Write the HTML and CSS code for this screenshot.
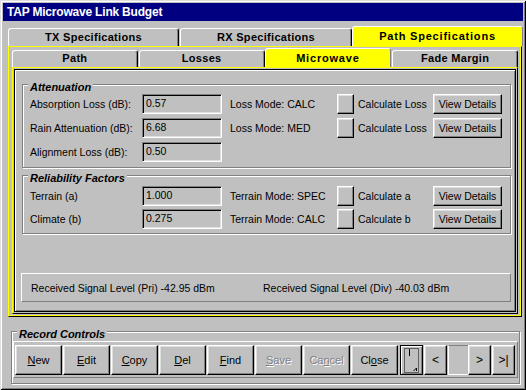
FILE: index.html
```html
<!doctype html>
<html lang="en">
<head>
    <meta charset="UTF-8">
    <meta name="viewport" content="width=device-width, initial-scale=1.0">
    <title>TAP Microwave Link Budget</title>
    <link rel="stylesheet" href="styles.css">
</head>
<body>
<div class="window">
    <div class="titlebar">TAP Microwave Link Budget</div>

    <div class="tab-strip main-tabs">
        <div class="tab tx">TX Specifications</div>
        <div class="tab rx">RX Specifications</div>
        <div class="tab active path-spec">Path Specifications</div>
    </div>

    <div class="outer-page">
        <div class="tab-strip sub-tabs">
            <div class="tab sub path">Path</div>
            <div class="tab sub losses">Losses</div>
            <div class="tab sub active microwave">Microwave</div>
            <div class="tab sub fade">Fade Margin</div>
        </div>

        <div class="inner-page">
            <div class="frame">
                <div class="group attenuation">
                    <div class="group-title">Attenuation</div>
                    <div class="row">
                        <span class="label">Absorption Loss (dB):</span>
                        <span class="field">0.57</span>
                        <span class="mode">Loss Mode: CALC</span>
                        <button class="btn square"></button>
                        <span class="calc">Calculate Loss</span>
                        <button class="btn details">View Details</button>
                    </div>
                    <div class="row">
                        <span class="label">Rain Attenuation (dB):</span>
                        <span class="field">6.68</span>
                        <span class="mode">Loss Mode: MED</span>
                        <button class="btn square"></button>
                        <span class="calc">Calculate Loss</span>
                        <button class="btn details">View Details</button>
                    </div>
                    <div class="row">
                        <span class="label">Alignment Loss (dB):</span>
                        <span class="field">0.50</span>
                    </div>
                </div>

                <div class="group reliability">
                    <div class="group-title">Reliability Factors</div>
                    <div class="row">
                        <span class="label">Terrain (a)</span>
                        <span class="field">1.000</span>
                        <span class="mode">Terrain Mode: SPEC</span>
                        <button class="btn square"></button>
                        <span class="calc">Calculate a</span>
                        <button class="btn details">View Details</button>
                    </div>
                    <div class="row">
                        <span class="label">Climate (b)</span>
                        <span class="field">0.275</span>
                        <span class="mode">Terrain Mode: CALC</span>
                        <button class="btn square"></button>
                        <span class="calc">Calculate b</span>
                        <button class="btn details">View Details</button>
                    </div>
                </div>

                <div class="status">
                    <span class="status-pri">Received Signal Level (Pri) -42.95 dBm</span>
                    <span>Received Signal Level (Div) -40.03 dBm</span>
                </div>
            </div>
        </div>
    </div>

    <div class="group record">
        <div class="group-title">Record Controls</div>
        <div class="toolbar">
            <button class="btn cmd"><u>N</u>ew</button>
            <button class="btn cmd"><u>E</u>dit</button>
            <button class="btn cmd"><u>C</u>opy</button>
            <button class="btn cmd"><u>D</u>el</button>
            <button class="btn cmd"><u>F</u>ind</button>
            <button class="btn cmd disabled"><u>S</u>ave</button>
            <button class="btn cmd disabled">Ca<u>n</u>cel</button>
            <button class="btn cmd">Cl<u>o</u>se</button>
            <button class="btn nav new-rec">
                <svg width="15" height="25" viewBox="0 0 15 25">
                    <rect x="0.5" y="0.5" width="14" height="24" fill="none" stroke="#000" stroke-dasharray="1 1"/>
                    <line x1="5.5" y1="1" x2="5.5" y2="8" stroke="#000"/>
                    <path d="M9.5 23 L12.5 20 L12.5 23" fill="none" stroke="#000"/>
                </svg>
            </button>
            <button class="btn nav prev">&lt;</button>
            <span class="rec-num"></span>
            <button class="btn nav next">&gt;</button>
            <button class="btn nav last">&gt;|</button>
        </div>
    </div>
</div>
</body>
</html>
```

FILE: styles.css
```css
body {
    margin: 0;
    font-family: "Liberation Sans", Arial, sans-serif;
    font-size: 10.5px;
    color: #000;
    background-color: #c0c0c0;
}

.window {
    width: 526px;
    height: 390px;
    box-sizing: border-box;
    padding: 3px;
    background-color: #c0c0c0;
    box-shadow: inset 1px 1px #dfdfdf, inset -1px -1px #000,
                inset 2px 2px #fff, inset -2px -2px #808080;
}

.titlebar {
    height: 18px;
    line-height: 18px;
    padding-left: 4px;
    background-color: #000080;
    color: #fff;
    font-size: 12px;
    font-weight: bold;
    letter-spacing: -0.2px;
}

/* tabs */
.tab-strip {
    display: flex;
    align-items: flex-end;
}

.main-tabs {
    height: 25px;
    padding-left: 5px;
}

.sub-tabs {
    height: 20px;
}

.tab {
    box-sizing: border-box;
    height: 18px;
    line-height: 16px;
    text-align: center;
    font-size: 11px;
    font-weight: bold;
    letter-spacing: 0.3px;
    border: 1px solid;
    border-bottom: none;
    border-color: #fff #000 transparent #fff;
    border-radius: 3px 3px 0 0;
    box-shadow: inset -1px 0 #808080;
    background-color: #c0c0c0;
}

.tab.active {
    height: 20px;
    line-height: 19px;
    background-color: #ff0;
    letter-spacing: 0.8px;
    box-shadow: none;
    border-color: #fff #808080 transparent #fff;
}

.tx { width: 171px; margin-right: 1px; }
.rx { width: 172px; }
.path-spec { width: 171px; }

.tab.sub {
    height: 17px;
    line-height: 15px;
}

.tab.sub.active {
    height: 19px;
    line-height: 18px;
}

.path { width: 126px; }
.losses { width: 126px; margin-left: 1px; }
.microwave { width: 127px; }
.fade { width: 126px; margin-left: 1px; }

/* pages */
.outer-page {
    box-sizing: border-box;
    width: 514px;
    height: 271px;
    margin-left: 5px;
    padding: 0 3px 2px 3px;
    border: 1px solid;
    border-color: #ff0 #000 #000 #ff0;
    box-shadow: inset -1px -1px #ff0;
}

.inner-page {
    box-sizing: border-box;
    height: 247px;
    padding: 1px;
    border: 1px solid;
    border-color: #ff0 #000 #000 #ff0;
}

.frame {
    box-sizing: border-box;
    height: 243px;
    border: 1px solid #000;
    box-shadow: inset 1px 1px #fff, inset -1px -1px #808080;
    overflow: hidden;
}

/* group boxes */
.group {
    box-sizing: border-box;
    border: 1px solid #808080;
    box-shadow: inset 1px 1px #fff, 1px 1px #fff;
    padding: 0 0 5px 7px;
}

.group-title {
    display: table;
    height: 14px;
    line-height: 14px;
    margin: -5px 0 0 -2px;
    padding: 0 2px;
    background-color: #c0c0c0;
    font-size: 11px;
    font-weight: bold;
    font-style: italic;
}

.attenuation {
    width: 489px;
    margin: 14px 0 0 7px;
}

.reliability {
    width: 489px;
    margin: 7px 0 0 7px;
    padding-bottom: 4px;
}

.row {
    display: flex;
    align-items: center;
    height: 20px;
    margin-top: 4px;
}

.attenuation .group-title + .row {
    margin-top: 0;
}

.reliability .row {
    margin-top: 3px;
}

.reliability .group-title + .row {
    margin-top: 1px;
}

.label {
    width: 112px;
}

.field {
    box-sizing: border-box;
    width: 80px;
    height: 20px;
    line-height: 17px;
    padding-left: 3px;
    border: 1px solid;
    border-color: #808080 #fff #fff #808080;
    box-shadow: inset 1px 1px #000, inset -1px -1px #dfdfdf;
}

.mode {
    width: 107px;
    margin-left: 8px;
}

.calc {
    width: 75px;
    margin-left: 4px;
}

/* buttons */
.btn {
    box-sizing: border-box;
    padding: 0;
    font: inherit;
    color: #000;
    background-color: #c0c0c0;
    border: 1px solid;
    border-color: #fff #000 #000 #fff;
    box-shadow: inset -1px -1px #808080, inset 1px 1px #dfdfdf;
}

.square {
    width: 17px;
    height: 20px;
}

.details {
    width: 69px;
    height: 20px;
}

.status {
    box-sizing: border-box;
    display: flex;
    align-items: center;
    width: 490px;
    height: 29px;
    margin: 39px 0 0 6px;
    padding-left: 9px;
    border: 1px solid;
    border-color: #fff #808080 #808080 #fff;
}

.status-pri {
    width: 232px;
}

/* record controls */
.record {
    width: 509px;
    height: 53px;
    margin: 14px 0 0 8px;
    padding: 0 0 4px 1px;
}

.record .group-title {
    margin-left: 4px;
}

.toolbar {
    display: flex;
    box-sizing: border-box;
    width: 505px;
    height: 37px;
    padding: 3px 1px 1px 1px;
    border: 1px solid;
    border-color: #fff #808080 #808080 #fff;
}

.cmd {
    width: 47px;
    height: 30px;
    margin-right: 1px;
    font-size: 11px;
}

.cmd.disabled {
    color: #808080;
    text-shadow: 1px 1px #fff;
}

.nav {
    width: 23px;
    height: 30px;
    margin-left: 1px;
    font-size: 12px;
}

.new-rec {
    border-color: #000;
    box-shadow: inset 1px 1px #fff, inset -1px -1px #808080;
    display: flex;
    align-items: center;
    justify-content: center;
}

.rec-num {
    box-sizing: border-box;
    width: 20px;
    height: 30px;
    margin-left: 1px;
    border-left: 1px solid #fff;
    border-bottom: 1px solid #fff;
    border-top: 1px solid #808080;
}

.next {
    margin-left: 0;
}

.last {
    margin-left: 1px;
}
```
